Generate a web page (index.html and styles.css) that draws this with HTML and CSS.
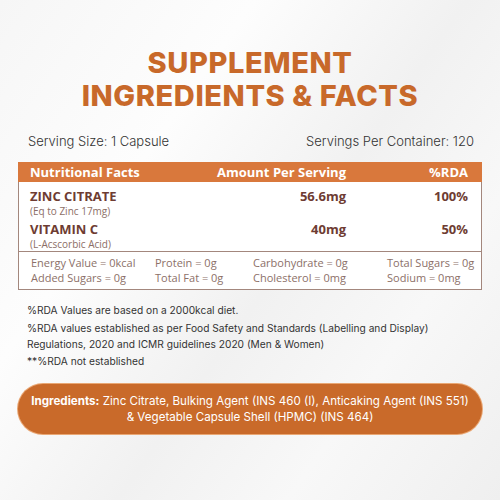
FILE: index.html
```html
<!DOCTYPE html>
<html lang="en">
<head>
    <meta charset="UTF-8">
    <meta name="viewport" content="width=device-width, initial-scale=1.0">
    <title>Supplement Facts</title>
    <link rel="stylesheet" href="styles.css">
</head>
<body>

<div class="page">
    <h1 class="title">SUPPLEMENT<br>INGREDIENTS &amp; FACTS</h1>

    <div class="serving">
        <span>Serving Size: 1 Capsule</span>
        <span>Servings Per Container: 120</span>
    </div>

    <!-- Facts table -->
    <div class="facts">
        <div class="facts-head">
            <span>Nutritional Facts</span>
            <span class="num">Amount Per Serving</span>
            <span class="num">%RDA</span>
        </div>

        <div class="facts-row">
            <div>
                <div class="name">ZINC CITRATE</div>
                <div class="sub">(Eq to Zinc 17mg)</div>
            </div>
            <div class="num val">56.6mg</div>
            <div class="num val">100%</div>
        </div>

        <div class="facts-row">
            <div>
                <div class="name">VITAMIN C</div>
                <div class="sub">(L-Acscorbic Acid)</div>
            </div>
            <div class="num val">40mg</div>
            <div class="num val">50%</div>
        </div>

        <div class="extra">
            <span>Energy Value = 0kcal</span>
            <span>Protein = 0g</span>
            <span>Carbohydrate = 0g</span>
            <span>Total Sugars = 0g</span>
            <span>Added Sugars = 0g</span>
            <span>Total Fat = 0g</span>
            <span>Cholesterol = 0mg</span>
            <span>Sodium = 0mg</span>
        </div>
    </div>

    <div class="notes">
        <p class="first">%RDA Values are based on a 2000kcal diet.</p>
        <p>%RDA values established as per Food Safety and Standards (Labelling and Display)<br>
        Regulations, 2020 and ICMR guidelines 2020 (Men &amp; Women)<br>
        **%RDA not established</p>
    </div>

    <div class="ingredients">
        <b>Ingredients:</b> Zinc Citrate, Bulking Agent (INS 460 (I), Anticaking Agent (INS 551)<br>
        &amp; Vegetable Capsule Shell (HPMC) (INS 464)
    </div>
</div>

</body>
</html>
```

FILE: styles.css
```css
/* General page styling */
body {
    margin: 0;
    padding: 0;
    font-family: Inter, "Noto Sans", sans-serif;
    background: linear-gradient(125deg, #f6f6f6 0%, #fdfdfd 30%, #f1f1f1 55%, #f8f8f8 75%, #efefef 100%);
}

.page {
    width: 500px;
    height: 500px;
    padding-top: 46px;
    box-sizing: border-box;
}

.title {
    margin: 0;
    text-align: center;
    font-size: 29px;
    line-height: 33px;
    font-weight: 800;
    color: #c8692a;
    letter-spacing: 0.6px;
}

.serving {
    display: flex;
    justify-content: space-between;
    margin: 21px 26px 0 28px;
    font-size: 13px;
    font-weight: 300;
    color: #333;
}

/* Facts table */
.facts {
    margin: 13px 18px 0;
    background-color: #fff;
    border: 1px solid #a3877d;
    border-top: none;
    font-family: "Open Sans", sans-serif;
}

.facts-head,
.facts-row {
    display: grid;
    grid-template-columns: 1fr 160px 122px;
    padding: 0 13px 0 11px;
}

.facts-head {
    background-color: #d9783c;
    color: #fff;
    font-weight: 700;
    font-size: 13px;
    line-height: 20px;
    margin: 0 -1px;
    padding-left: 12px;
    padding-right: 14px;
}

.num {
    text-align: right;
}

.facts-row {
    padding-top: 6px;
}

.facts-row + .facts-row {
    padding-top: 4px;
    padding-bottom: 1px;
}

.name {
    font-size: 13px;
    font-weight: 700;
    color: #6e3c32;
    line-height: 17px;
}

.sub {
    font-size: 10px;
    color: #8c6e66;
    line-height: 12px;
}

.val {
    font-size: 13px;
    font-weight: 700;
    color: #6e3c32;
    line-height: 17px;
}

.extra {
    display: grid;
    grid-template-columns: 124px 98px 134px 1fr;
    border-top: 1px solid #a3877d;
    padding: 3px 0 4px 12px;
    font-size: 11px;
    line-height: 15px;
    color: #8c7068;
}

.notes {
    margin: 12px 0 0 27px;
    font-size: 10.2px;
    color: #333;
}

.notes p {
    margin: 0;
    line-height: 16.6px;
}

.notes .first {
    margin-bottom: 1px;
}

/* Ingredients pill */
.ingredients {
    margin: 15px 18px 0;
    padding: 9px 0;
    background-color: #c96a2a;
    border-radius: 26px;
    box-shadow: 0 0 0 1px #e9a774;
    text-align: center;
    color: #fff;
    font-size: 11.6px;
    line-height: 16px;
}

.ingredients b {
    font-weight: 700;
}
```
